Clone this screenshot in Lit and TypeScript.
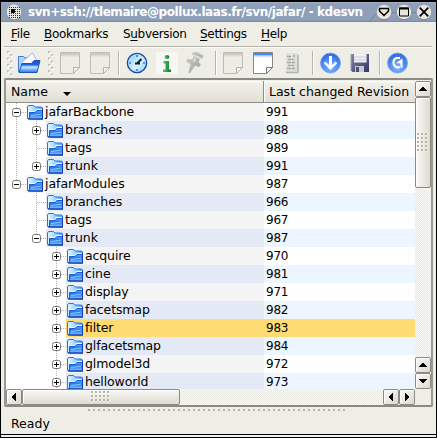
import { LitElement, html, css, svg, nothing } from "lit";
import { customElement, property } from "lit/decorators.js";

type Expander = "plus" | "minus" | "none";
interface Entry { name: string; rev: number; level: number; box: Expander; selected?: boolean; }

const entries: Entry[] = [
  { name: "jafarBackbone", rev: 991, level: 0, box: "minus" },
  { name: "branches", rev: 988, level: 1, box: "plus" },
  { name: "tags", rev: 989, level: 1, box: "none" },
  { name: "trunk", rev: 991, level: 1, box: "plus" },
  { name: "jafarModules", rev: 987, level: 0, box: "minus" },
  { name: "branches", rev: 966, level: 1, box: "none" },
  { name: "tags", rev: 967, level: 1, box: "none" },
  { name: "trunk", rev: 987, level: 1, box: "minus" },
  { name: "acquire", rev: 970, level: 2, box: "plus" },
  { name: "cine", rev: 981, level: 2, box: "plus" },
  { name: "display", rev: 971, level: 2, box: "plus" },
  { name: "facetsmap", rev: 982, level: 2, box: "plus" },
  { name: "filter", rev: 983, level: 2, box: "plus", selected: true },
  { name: "glfacetsmap", rev: 984, level: 2, box: "plus" },
  { name: "glmodel3d", rev: 972, level: 2, box: "plus" },
  { name: "helloworld", rev: 973, level: 2, box: "plus" },
];

// Where the entry's own guide line ends inside its 18px row.
const guideEnd = (i: number) => {
  const e = entries[i];
  const next = entries.slice(i + 1).find((n) => n.level <= e.level);
  const last = e.level !== 2 && (!next || next.level < e.level);
  return last ? 9 : 18;
};

@customElement("tree-row")
export class TreeRow extends LitElement {
  @property({ type: Number }) index = 0;
  static styles = css`
    :host { display: flex; height: 18px; flex: none; }
    .lines { flex: none; height: 18px; display: block; shape-rendering: crispEdges; }
    .lines rect { shape-rendering: geometricPrecision; }
    .l0 { width: 20px; } .l1 { width: 40px; } .l2 { width: 60px; }
    .name { flex: 1; display: flex; align-items: flex-start; background: #f4f4f4; padding-left: 1px; min-width: 0; }
    .rev { width: 151px; flex: none; box-sizing: border-box; padding-left: 2px; background: #fff; line-height: 18px; font-size: 12px; letter-spacing: -.25px; }
    .name.odd { background: #e4eaf5; }
    .rev.odd { background: #edf5ff; }
    .name.sel, .rev.sel { background: #ffdc73; }
    .folder { width: 16px; height: 17px; flex: none; margin-right: 2px; }
    .label { line-height: 17px; height: 18px; white-space: nowrap; letter-spacing: -.05px; }
    .l2 + .name .label { letter-spacing: -.12px; }
  `;
  render() {
    const e = entries[this.index];
    const x = 10.5 + e.level * 20;
    const w = 20 + e.level * 20;
    const cls = e.selected ? "sel" : this.index % 2 ? "odd" : "";
    const parentGoesOn = e.level === 1 && this.index < 4;
    const dot = (x1: number, y1: number, x2: number, y2: number) =>
      svg`<line x1=${x1} y1=${y1} x2=${x2} y2=${y2} stroke="#b5b5ad" stroke-dasharray="1 1"/>`;
    return html`
      <svg class="lines l${e.level}" viewBox="0 0 ${w} 18">
        ${dot(x, 0, x, guideEnd(this.index))}
        ${parentGoesOn ? dot(10.5, 0, 10.5, 18) : nothing}
        ${dot(x, 9.5, w, 9.5)}
        ${e.box === "none" ? nothing : svg`
          <rect x=${x - 4} y="5.500" width="8" height="8" rx="2" fill="#fff" stroke="#77776f"/>
          <path d="M${x - 2.5} 9.500h5" stroke="#000"/>
          ${e.box === "plus" ? svg`<path d="M${x} 7v5" stroke="#000"/>` : nothing}`}
      </svg>
      <div class="name ${cls}">
        <svg class="folder" viewBox="0 0 16 17">
          <defs>
            <linearGradient id="b" x1="0" y1="0" x2="1" y2="0"><stop offset="0" stop-color="#e8f6ff"/><stop offset=".5" stop-color="#a4d4fc"/><stop offset="1" stop-color="#4c97ef"/></linearGradient>
            <linearGradient id="f" x1="0" y1="0" x2="0" y2="1"><stop offset="0" stop-color="#5aa9ff"/><stop offset=".4" stop-color="#2277f2"/><stop offset=".6" stop-color="#3d8ffa"/><stop offset="1" stop-color="#8cccff"/></linearGradient>
          </defs>
          <path d="M.5 15.500V3.500L2 2.500h4.500l1.500 1.500h6.500l1 1v11z" fill="url(#b)" stroke="#2a74dc"/>
          <path d="M2.500 15.500V9.500h5.500l2-2h5.500v8.500h-13z" fill="url(#f)" stroke="#1a5ad2"/>
          <path d="M3 8.500h4.500l2-2H15" stroke="#fff" fill="none"/>
          <path d="M1 16h15" stroke="#0a2f9c"/><path d="M15.500 6v10" stroke="#0f3fb4"/>
          <path d="M4 12.500L14.500 11" stroke="#b5e0ff" opacity=".7"/>
        </svg>
        <span class="label">${e.name}</span>
      </div>
      <div class="rev ${cls}">${e.rev}</div>`;
  }
}

const page = (active: boolean) => svg`
  <path d="M.5 .5h19v15l-6 6h-13z" fill=${active ? "#fff" : "#edede6"} stroke=${active ? "#85858a" : "#bdbdb6"}/>
  <path d="M1 1h18v2.500h-18z" fill=${active ? "#4a86f4" : "#cbcbc4"}/>
  <path d="M1 3.500h18v1h-18z" fill=${active ? "#a9c5fb" : "#dcdcd5"}/>
  <path d="M13.500 21.500v-6h6z" fill=${active ? "#f5f5f5" : "#f5f5f0"} stroke=${active ? "#77777c" : "#b2b2ab"}/>`;

const defs = svg`<defs>
  <radialGradient id="ball" cx=".5" cy=".75" r=".75"><stop offset="0" stop-color="#84b4ff"/><stop offset=".6" stop-color="#4a87ee"/><stop offset="1" stop-color="#2e66d4"/></radialGradient>
  <linearGradient id="face" x1="0" y1="0" x2="1" y2="1"><stop offset="0" stop-color="#7cc6fa"/><stop offset=".55" stop-color="#d7f0ff"/><stop offset="1" stop-color="#84cdfa"/></linearGradient>
  <linearGradient id="open" x1="0" y1="0" x2="0" y2="1"><stop offset="0" stop-color="#1453cc"/><stop offset=".35" stop-color="#1f66dc"/><stop offset=".55" stop-color="#cbe9ff"/><stop offset="1" stop-color="#2470e8"/></linearGradient>
  <linearGradient id="disk" x1="0" y1="0" x2="1" y2="1"><stop offset="0" stop-color="#8588a8"/><stop offset="1" stop-color="#33365f"/></linearGradient>
  <linearGradient id="pin" x1="0" y1="0" x2="1" y2="1"><stop offset="0" stop-color="#d0d0cb"/><stop offset="1" stop-color="#9c9c97"/></linearGradient>
  <linearGradient id="green" x1="0" y1="0" x2="1" y2="0"><stop offset="0" stop-color="#4cc36a"/><stop offset="1" stop-color="#0a7a34"/></linearGradient>
</defs>`;

const icons: Record<string, unknown> = {
  open: svg`<path d="M.5 19.500V4.500h5l1.500 1.500h10v13z" fill="#a9d4ff" stroke="#3d78dd"/>
    <path d="M3.500 10.500l11-9.500 5 9v2h-16z" fill="#fafaff" stroke="#a2a7cf" stroke-width=".8"/>
    <path d="M1 20.500L4 11.500h9.500l2.500-3h6l-3 12z" fill="url(#open)" stroke="#1546b4" stroke-width=".9"/>`,
  page: page(false),
  newpage: page(true),
  clock: svg`<circle cx="11" cy="11" r="9.600" fill="url(#face)" stroke="#1747a9" stroke-width="1.400"/>
    <circle cx="11" cy="11" r="8.200" fill="none" stroke="#b7e2ff" stroke-width=".8"/>
    <path d="M11 3v2M11 17v2M3 11h2M17 11h2" stroke="#437cc7" stroke-width="1.600"/>
    <path d="M15.500 7L11 11.500M9 11.500h5" stroke="#14202e" stroke-width="2"/>`,
  info: svg`<path d="M0 0h22v22H0z" fill="#f7f8f3"/><ellipse cx="11" cy="5" rx="2.400" ry="2" fill="url(#green)"/>
    <path d="M7.500 9h5.500v8.500h2v2.500h-8v-2.500h2.500v-6h-2z" fill="url(#green)"/>`,
  pin: svg`<path d="M6 1.500l4-1.500 7 3.500-.500 2.500h-2.500l-1.500 4 2 2.500-1.500 2.500-4-1.500-5 7.500-1.500-.500 2.500-8.500-4.500-2.500 1-2.500 4.500 1 2-3.500z" fill="url(#pin)" stroke="#c0c0ba" stroke-width=".6"/><path d="M7.500 3l7 3.500M9 6l-1 4" stroke="#e4e4df" stroke-width="1.500"/>`,
  log: svg`<path d="M3 1h12v19H3z" fill="#dfdfd9"/><path d="M15 3v17.500H3" fill="none" stroke="#b3b3ad" stroke-width="1.500"/>
    <path d="M4 4.500h4M5 7.500h6M4 10.500h8M5 13.500h6M4 16.500h8M10 4h2" stroke="#aaaaa4" stroke-width="1.500"/><path d="M8.500 2v16" stroke="#f0f0eb" stroke-dasharray="2 1"/>`,
  down: svg`<circle cx="10.500" cy="11" r="10" fill="url(#ball)" stroke="#7aa2ec" stroke-width=".8"/>
    <path d="M9 4h3v9l3.500-3.500 1.800 1.700-6.800 6.800-6.800-6.800 1.800-1.700L9 13z" fill="#fff"/>`,
  save: svg`<path d="M1 2h18v18H2.500L1 18.500z" fill="url(#disk)"/>
    <path d="M4 2h12.500v8.500H4z" fill="#f0f0f4"/><path d="M4 5h12.500M4 8h12.500" stroke="#c9cad4"/>
    <path d="M5 14h9v6H5z" fill="#c6c8d6"/><path d="M6 15h3v5H6z" fill="#4c4f73"/><path d="M1 2v16.500" stroke="#9da0bb"/>`,
  refresh: svg`<circle cx="10.500" cy="11" r="10" fill="url(#ball)" stroke="#7aa2ec" stroke-width=".8"/>
    <path d="M13 6H9.500a4.800 4.800 0 1 0 3.500 9" fill="none" stroke="#fff" stroke-width="2.200"/><path d="M9 11L15.500 6.500v9.500l-2-.500v-4z" fill="#fff"/>`,
};

@customElement("app-root")
export class AppRoot extends LitElement {
  static styles = css`
    :host { display: block; width: 437px; height: 438px; }
    * { box-sizing: border-box; }
    .window { width: 437px; height: 438px; display: flex; flex-direction: column; overflow: hidden; background: #eeeee6;
      border: 1px solid #000; border-top-width: 2px; font: 12.5px/18px "DejaVu Sans", sans-serif; color: #000; }
    .title { height: 20px; flex: none; display: flex; align-items: center; padding: 0 4px 0 5px; background: linear-gradient(#a4b0c4, #8f9fb8 2px, #8f9fb8 18px, #7787a0); }
    .title .text { width: 341px; flex: none; margin-left: 6px; color: #fff; font-weight: bold; font-size: 12px; line-height: 18px; white-space: nowrap; letter-spacing: -.43px; }
    .trim { flex: 1; height: 20px; min-width: 0; }
    .btn { width: 16px; height: 16px; flex: none; }
    .link { width: 4px; height: 1px; background: #76859d; flex: none; }
    .menu { height: 25px; flex: none; display: flex; margin: 0 4px 0 3px; padding: 2px 0 0 7px; border-bottom: 1px solid #b4b4ac; box-shadow: 0 1px #fbfbf7; font-size: 12px; line-height: 21px; letter-spacing: -.32px; }
    .menu span { white-space: nowrap; }
    .m1 { width: 33px; } .m2 { width: 79px; } .m3 { width: 77px; } .m4 { width: 61px; }
    u { text-underline-offset: 2px; }
    .toolbar { height: 30px; flex: none; display: flex; align-items: flex-start; padding: 4px 0 0 6px; margin-top: 1px; }
    .toolbar svg { width: 22px; height: 22px; flex: none; margin-right: 8px; overflow: visible; }
    .toolbar .grip { width: 6px; height: 26px; margin: -1px 5px 0 0; }
    .toolbar .grip.second { margin-right: 6px; }
    .toolbar i { width: 2px; height: 24px; flex: none; background: linear-gradient(90deg, #b4b4ac 1px, #fff 1px); margin: -1px 6px 0 -1px; }
    .toolbar i.first { margin-left: -2px; }
    .frame { flex: none; height: 329px; margin: 0 3px; border: 2px solid #8a8a84; border-color: #8a8a84 #999992; border-radius: 2px; display: flex; flex-direction: column; padding-top: 1px; }
    .top { display: flex; height: 308px; flex: none; }
    .list { flex: 1; display: flex; flex-direction: column; overflow: hidden; background: #fff; min-width: 0; }
    .head { display: flex; flex: none; height: 22px; background: linear-gradient(#fff, #f1f0e9 2px, #e2dfd5); border-bottom: 1px solid #8e8e88; line-height: 21px; }
    .hname { flex: 1; padding-left: 5px; display: flex; align-items: center; }
    .tri { border: 4px solid transparent; border-top-color: #000; border-bottom: 0; margin: 4px 0 0 15px; }
    .hrev { width: 152px; border-left: 1px solid #8e8e88; box-shadow: inset 1px 0 #fff; padding-left: 5px; white-space: nowrap; }
    .track { background-color: #fafaf7; background-image: conic-gradient(#e9e9e2 25%, transparent 0 50%, #e9e9e2 0 75%, transparent 0); background-size: 2px 2px; }
    .vbar { width: 16px; flex: none; display: flex; flex-direction: column; }
    .hbar { width: 409px; height: 16px; flex: none; display: flex; }
    .cell, .thumb { border: 1px solid #8b8b84; border-radius: 2px; background: linear-gradient(135deg, #fbfaf6, #dcd8ce); box-shadow: inset 1px 1px #fff; display: flex; align-items: center; justify-content: center; flex: none; }
    .cell { width: 16px; height: 16px; }
    .cell svg { width: 8px; height: 8px; shape-rendering: crispEdges; }
    .thumb.v { width: 16px; height: 91px; background: linear-gradient(90deg, #faf9f5, #dedad0); }
    .thumb.h { width: 158px; height: 16px; background: linear-gradient(#faf9f5, #dedad0); }
    .dots { width: 12px; height: 20px; background: radial-gradient(circle at 1px 1px, #b7b5aa 1px, #fff 1.3px, transparent 1.8px) 0 0 / 4px 4px; }
    .h .dots { width: 20px; height: 12px; }
    .fill { flex: 1; }
    .split { flex: none; width: 260px; height: 3px; margin: 2px 0 0 87px; background: radial-gradient(circle at 1px 1px, #b7b5aa 1px, transparent 1.5px) 0 0 / 5px 3px; }
    .status { flex: none; height: 22px; padding-left: 10px; line-height: 23px; }
    .base { height: 3px; flex: none; background: #eee; border-top: 1px solid #000; }
  `;

  private arrow(d: string) {
    return html`<div class="cell"><svg viewBox="0 0 8 8"><path d=${d} /></svg></div>`;
  }
  private icon(name: string) {
    return html`<svg viewBox="0 0 22 22">${defs}${icons[name]}</svg>`;
  }
  private grip(cls = "") {
    return html`<svg class="grip ${cls}" viewBox="0 0 6 26">${[0, 1, 2, 3, 4, 5, 6, 7].map((n) => svg`
      <path d="M${n % 2 ? 3.5 : 0.5} ${n * 3.2 + 2}v-1.500h2" fill="none" stroke="#b3b3aa"/><path d="M${n % 2 ? 4 : 1} ${n * 3.2 + 2.5}h1.500v-1" fill="none" stroke="#fff"/>`)}</svg>`;
  }
  private round(body: unknown) {
    return html`<svg class="btn" viewBox="0 0 16 16"><circle cx="8" cy="8.500" r="7.500" fill="#65748c"/><circle cx="8" cy="8" r="7.300" fill="#e6e6df"/>${body}</svg>`;
  }

  render() {
    const steps = [0, 1, 2, 3, 4, 5];
    const stipple = steps.flatMap((r) => steps.map((c) => svg`<path d="M${3 + c * 2} ${3.5 + r * 2}h1" stroke="#33332f"/>`));
    const up = "M3 2h2v1h1v1h1v1h1v1H0V5h1V4h1V3h1z";
    const down = "M0 2h8v1H7v1H6v1H5v1H3V5H2V4H1V3H0z";
    const left = "M6 0v8H5V7H4V6H3V5H2V3h1V2h1V1h1V0z";
    const right = "M2 0v8h1V7h1V6h1V5h1V3H5V2H4V1H3V0z";
    return html`<div class="window">
      <div class="title">
        <svg class="btn" viewBox="0 0 16 16"><circle cx="8" cy="8.500" r="7.500" fill="#65748c"/><circle cx="8" cy="8" r="7.400" fill="#e6e6df"/>${stipple}<path d="M5 5.500h4v3H5zM5.500 5h3v4h-3z"/></svg>
        <span class="text">svn+ssh://tlemaire@pollux.laas.fr/svn/jafar/ - kdesvn</span>
        <svg class="trim" viewBox="0 0 7 20"><path d="M0 19.500l7-7.500" stroke="#76859d" fill="none"/></svg>
        ${this.round(svg`<path d="M3.500 4.500h9v2.500l-4.500 4.500-4.500-4.500z" fill="none" stroke="#000" stroke-width="1.500"/>`)}<span class="link"></span>
        ${this.round(svg`<path d="M3.500 4h9v8h-9z" fill="none" stroke="#000"/><path d="M3 4.500h10" stroke="#000" stroke-width="2"/>`)}<span class="link"></span>
        ${this.round(svg`<path d="M3.700 3.700l8.600 8.600M12.300 3.700l-8.600 8.600" stroke="#000" stroke-width="1.700"/>`)}
      </div>
      <div class="menu">
        <span class="m1"><u>F</u>ile</span><span class="m2"><u>B</u>ookmarks</span><span class="m3">S<u>u</u>bversion</span><span class="m4"><u>S</u>ettings</span><span><u>H</u>elp</span>
      </div>
      <div class="toolbar">
        ${this.grip()}${this.icon("open")}${this.grip("second")}${this.icon("page")}${this.icon("page")}<i class="first"></i>
        ${this.icon("clock")}${this.icon("info")}${this.icon("pin")}<i></i>
        ${this.icon("page")}${this.icon("newpage")}${this.icon("log")}<i></i>
        ${this.icon("down")}${this.icon("save")}<i></i>${this.icon("refresh")}
      </div>
      <div class="frame">
        <div class="top">
          <div class="list">
            <div class="head"><div class="hname">Name<span class="tri"></span></div><div class="hrev">Last changed Revision</div></div>
            ${entries.map((_, i) => html`<tree-row .index=${i}></tree-row>`)}
          </div>
          <div class="vbar track">
            ${this.arrow(up)}
            <div class="thumb v"><div class="dots"></div></div>
            <div class="fill"></div>
            ${this.arrow(up)}${this.arrow(down)}
          </div>
        </div>
        <div class="hbar track">
          ${this.arrow(left)}
          <div class="thumb h"><div class="dots"></div></div><div class="fill"></div>
          ${this.arrow(left)}${this.arrow(right)}
        </div>
      </div>
      <div class="split"></div>
      <div class="status">Ready</div>
      <div class="fill"></div>
      <div class="base"></div>
    </div>`;
  }
}
